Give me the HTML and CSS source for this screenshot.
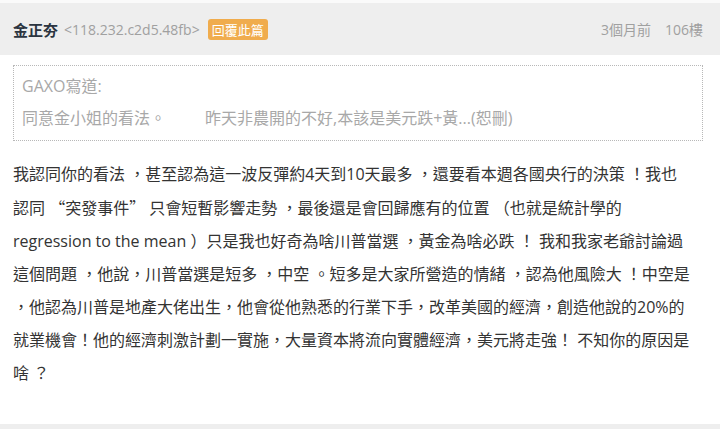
FILE: index.html
```html
<!DOCTYPE html>
<html lang="zh-Hant">
<head>
<meta charset="utf-8">
<link rel="stylesheet" href="styles.css">
</head>
<body>
<div class="post">
  <div class="post-head">
    <div class="author">
      <span class="name">金正夯</span>
      <span class="ip">&lt;118.232.c2d5.48fb&gt;</span>
      <span class="reply">回覆此篇</span>
    </div>
    <div class="meta">
      <span class="time">3個月前</span>
      <span class="floor">106樓</span>
    </div>
  </div>
  <div class="post-body">
    <div class="quote">
      <div class="quote-who">GAXO寫道:</div>
      <div class="quote-text">同意金小姐的看法。<span class="gap"></span>昨天非農開的不好,本該是美元跌+黃...(恕刪)</div>
    </div>
    <p class="content">我認同你的看法 ，甚至認為這一波反彈約4天到10天最多 ，還要看本週各國央行的決策 ！我也<br>認同 <span class="cjk">“突發事件”</span> 只會短暫影響走勢 ，最後還是會回歸應有的位置 （也就是統計學的<br>regression to the mean ）只是我也好奇為啥川普當選 ，黃金為啥必跌 ！ 我和我家老爺討論過<br>這個問題 ，他說，川普當選是短多 ，中空 。短多是大家所營造的情緒 ，認為他風險大 ！中空是<br>，他認為川普是地產大佬出生，他會從他熟悉的行業下手，改革美國的經濟，創造他說的20%的<br>就業機會！他的經濟刺激計劃一實施，大量資本將流向實體經濟，美元將走強！ 不知你的原因是<br>啥 ？</p>
  </div>
  <div class="post-foot"></div>
</div>
</body>
</html>
```
FILE: styles.css
```css
html, body {
  margin: 0;
  padding: 0;
  background: #ffffff;
}
body {
  font-family: "Open Sans", "Noto Sans CJK TC", sans-serif;
  color: #333333;
}
.post {
  width: 720px;
  height: 429px;
  display: flex;
  flex-direction: column;
  padding-top: 3px;
  box-sizing: border-box;
  background: #fafafa;
}
.post-head {
  height: 52px;
  background: #eeeeee;
  display: flex;
  align-items: center;
  justify-content: space-between;
  padding: 0 17px 0 13px;
  flex-shrink: 0;
}
.author {
  display: flex;
  align-items: center;
}
.name {
  font-size: 15px;
  font-weight: bold;
  color: #2b3440;
  font-family: "Noto Sans CJK TC", sans-serif;
}
.ip {
  font-size: 14px;
  color: #a0a0a0;
  margin-left: 6px;
}
.reply {
  margin-left: 8px;
  background: #f0ac4d;
  color: #ffffff;
  font-size: 13px;
  line-height: 21px;
  padding: 0 4px;
  border-radius: 3px;
  font-family: "Noto Sans CJK TC", sans-serif;
}
.meta {
  font-size: 14px;
  color: #a0a0a0;
  display: flex;
  gap: 14px;
}
.post-body {
  flex: 1;
  background: #ffffff;
  padding: 10px 17px 0 13px;
}
.quote {
  border: 1px dotted #b8b8b8;
  padding: 4px 8px 6px;
  color: #a8a8a8;
  font-size: 16px;
  line-height: 32px;
}
.gap {
  display: inline-block;
  width: 39px;
}
.content {
  margin: 17px 0 0;
  font-size: 16px;
  line-height: 33px;
  color: #333333;
  white-space: nowrap;
}
.cjk {
  font-family: "Noto Sans CJK TC", sans-serif;
}
.post-foot {
  height: 5px;
  background: #eeeeee;
  flex-shrink: 0;
}
```
